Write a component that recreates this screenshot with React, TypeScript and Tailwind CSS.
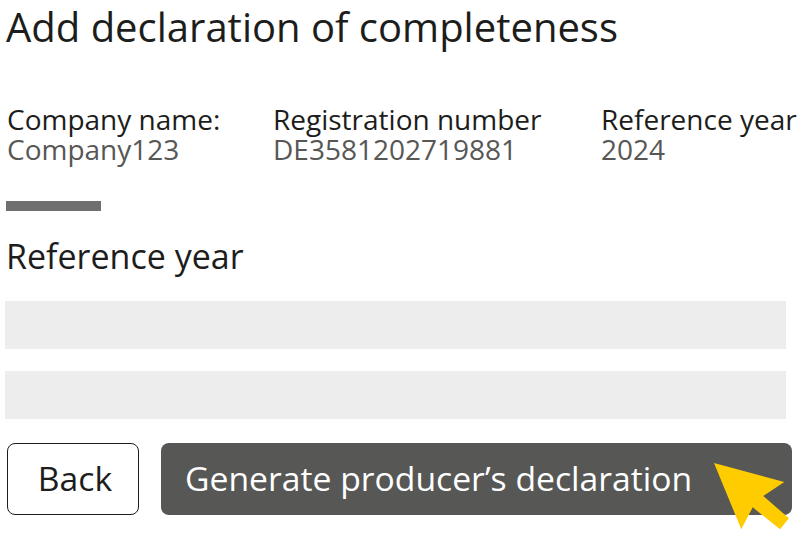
export default function App() {
  return (
    <div className="w-[800px] h-[534px] bg-white overflow-hidden relative font-['Open_Sans','Noto_Sans',sans-serif] text-[#1d1d1b]">
      <h1 className="text-[40px] leading-[44px] pl-[6px] pt-[5px] font-normal whitespace-nowrap">Add declaration of completeness</h1>
      <div className="flex pl-[7px] mt-[55px] text-[28px] leading-[30px] whitespace-nowrap">
        <div className="w-[266px]"><div>Company name:</div><div className="text-[#575756]">Company123</div></div>
        <div className="w-[328px]"><div>Registration number</div><div className="text-[#575756]">DE3581202719881</div></div>
        <div><div>Reference year</div><div className="text-[#575756]">2024</div></div>
      </div>
      <div className="w-[95px] h-[10px] bg-[#706f6f] ml-[6px] mt-[37px]" />
      <div className="text-[34px] leading-[40px] pl-[6px] mt-[25px]">Reference year</div>
      <div className="ml-[5px] w-[781px] h-[48px] bg-[#ededed] mt-[25px]" />
      <div className="ml-[5px] w-[781px] h-[48px] bg-[#ededed] mt-[22px]" />
      <div className="flex mt-[24px] ml-[7px] gap-[22px] text-[33.7px]">
        <button className="w-[132px] h-[72px] border border-[#1d1d1b] rounded-[8px] pl-[4px] pb-[2px]">Back</button>
        <button className="w-[631px] h-[72px] rounded-[8px] bg-[#575756] text-white text-left pl-[24px] pb-[2px]">Generate producer’s declaration</button>
      </div>
      <svg className="absolute left-[710px] top-[460px]" width="80" height="72" viewBox="0 0 80 72">
        <path d="M4 3 L74.3 22 L53.3 36 L79 58.3 L70 69.3 L42.7 47.3 L31.3 69.3 Z" fill="#ffcc00" />
      </svg>
    </div>
  );
}
